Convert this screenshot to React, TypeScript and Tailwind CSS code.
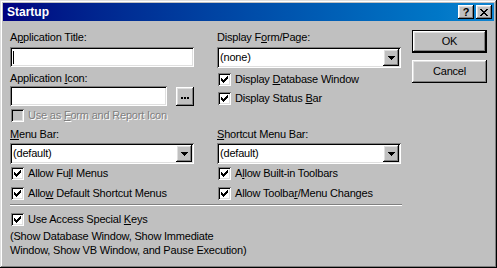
import React from "react";

const sunken =
  "shadow-[inset_1px_1px_#808080,inset_-1px_-1px_#ffffff,inset_2px_2px_#000000,inset_-2px_-2px_#dfdfdf]";
const raised =
  "shadow-[inset_-1px_-1px_#000000,inset_1px_1px_#ffffff,inset_-2px_-2px_#808080,inset_2px_2px_#dfdfdf]";

function Pixels({ rows, color = "#000" }: { rows: string[]; color?: string }) {
  const w = rows[0].length;
  const h = rows.length;
  return (
    <svg width={w} height={h} viewBox={`0 0 ${w} ${h}`} shapeRendering="crispEdges">
      {rows.flatMap((r, y) =>
        r.split("").map((c, x) =>
          c === "x" ? <rect key={`${x}-${y}`} x={x} y={y} width="1" height="1" fill={color} /> : null
        )
      )}
    </svg>
  );
}

const checkRows = ["......x", ".....xx", "x...xxx", "xx.xxx.", "xxxxx..", ".xxx...", "..x...."];
const closeRows = ["xx....xx", ".xx..xx.", "..xxxx..", "...xx...", "..xxxx..", ".xx..xx.", "xx....xx"];
const arrowRows = ["xxxxxxx", ".xxxxx.", "..xxx..", "...x..."];

function Check({
  children,
  disabled = false,
  checked = true,
}: {
  children: React.ReactNode;
  disabled?: boolean;
  checked?: boolean;
}) {
  return (
    <div className="flex items-center h-[13px] ml-[1px]">
      <span
        className={`flex items-center justify-center w-[13px] h-[13px] shrink-0 ${
          disabled ? "bg-[#c0c0c0]" : "bg-white"
        } ${sunken}`}
      >
        {checked && <Pixels rows={checkRows} />}
      </span>
      <span
        className={`ml-[4px] leading-[13px] whitespace-nowrap ${
          disabled ? "text-[#808080] [text-shadow:1px_1px_0_#ffffff]" : ""
        }`}
      >
        {children}
      </span>
    </div>
  );
}

function Combo({ value }: { value: string }) {
  return (
    <div className={`flex items-center h-[21px] w-full bg-white p-[2px] ${sunken}`}>
      <span className="flex-1 pl-[1px] leading-[13px]">{value}</span>
      <span className={`flex items-center justify-center w-[16px] h-[17px] bg-[#c0c0c0] ${raised}`}>
        <Pixels rows={arrowRows} />
      </span>
    </div>
  );
}

function Label({ children, className = "" }: { children: React.ReactNode; className?: string }) {
  return <div className={`h-[13px] leading-[13px] whitespace-nowrap ${className}`}>{children}</div>;
}

export default function App() {
  return (
    <div
      className={`flex flex-col w-[497px] h-[268px] p-[3px] bg-[#c0c0c0] text-[11px] tracking-[-0.2px] text-black font-['Liberation_Sans',Arial,sans-serif] shadow-[inset_-1px_-1px_#000000,inset_1px_1px_#dfdfdf,inset_-2px_-2px_#808080,inset_2px_2px_#ffffff]`}
    >
      {/* Title bar */}
      <div className="flex items-center h-[18px] pl-[4px] pr-[2px] bg-gradient-to-r from-[#000080] to-[#1084d0]">
        <span className="flex-1 text-white font-bold text-[12px] tracking-normal leading-[13px]">Startup</span>
        <div className="flex gap-[2px]">
          <span
            className={`flex items-center justify-center w-[16px] h-[14px] bg-[#c0c0c0] font-bold text-[11px] leading-[11px] ${raised}`}
          >
            ?
          </span>
          <span className={`flex items-center justify-center w-[16px] h-[14px] bg-[#c0c0c0] ${raised}`}>
            <Pixels rows={closeRows} />
          </span>
        </div>
      </div>

      {/* Body */}
      <div className="flex pl-[7px] pt-[9px]">
        <div className="flex flex-col w-[392px]">
          <div className="grid grid-cols-[184px_184px] gap-x-[23px] gap-y-[6px] mt-[1px]">
            {/* left top */}
            <div className="flex flex-col">
              <Label>
                A<u>p</u>plication Title:
              </Label>
              <div className={`flex items-center h-[20px] mt-[3px] pl-[3px] bg-white ${sunken}`}>
                <span className="w-px h-[13px] bg-black" />
              </div>
              <Label className="mt-[5px]">
                Application <u>I</u>con:
              </Label>
              <div className="flex mt-[1px]">
                <div className={`w-[157px] h-[20px] bg-white ${sunken}`} />
                <div
                  className={`flex items-end justify-center gap-[1px] w-[18px] h-[19px] mt-[1px] ml-[9px] pb-[7px] bg-[#c0c0c0] ${raised}`}
                >
                  <span className="w-[2px] h-[2px] bg-black" />
                  <span className="w-[2px] h-[2px] bg-black" />
                  <span className="w-[2px] h-[2px] bg-black" />
                </div>
              </div>
              <div className="mt-[3px]">
                <Check disabled checked={false}>
                  Use as <u>F</u>orm and Report Icon
                </Check>
              </div>
            </div>

            {/* middle top */}
            <div className="flex flex-col">
              <Label>
                Display F<u>o</u>rm/Page:
              </Label>
              <div className="mt-[3px]">
                <Combo value="(none)" />
              </div>
              <div className="mt-[5px]">
                <Check>
                  Display <u>D</u>atabase Window
                </Check>
              </div>
              <div className="mt-[6px]">
                <Check>
                  Display Status <u>B</u>ar
                </Check>
              </div>
            </div>

            {/* left bottom */}
            <div className="flex flex-col">
              <Label>
                <u>M</u>enu Bar:
              </Label>
              <div className="mt-[2px]">
                <Combo value="(default)" />
              </div>
              <div className="mt-[3px]">
                <Check>
                  Allow Fu<u>l</u>l Menus
                </Check>
              </div>
              <div className="mt-[7px]">
                <Check>
                  Allo<u>w</u> Default Shortcut Menus
                </Check>
              </div>
            </div>

            {/* middle bottom */}
            <div className="flex flex-col">
              <Label>
                <u>S</u>hortcut Menu Bar:
              </Label>
              <div className="mt-[2px]">
                <Combo value="(default)" />
              </div>
              <div className="mt-[3px]">
                <Check>
                  A<u>l</u>low Built-in Toolbars
                </Check>
              </div>
              <div className="mt-[7px]">
                <Check>
                  Allow Toolba<u>r</u>/Menu Changes
                </Check>
              </div>
            </div>
          </div>

          <div className="mt-[4px] h-[2px] border-t border-t-[#808080] border-b border-b-white" />

          <div className="mt-[7px]">
            <Check>
              Use Access Special <u>K</u>eys
            </Check>
          </div>
          <p className="mt-[3px] leading-[14px]">
            (Show Database Window, Show Immediate
            <br />
            Window, Show VB Window, and Pause Execution)
          </p>
        </div>

        {/* Buttons */}
        <div className="flex flex-col gap-[7px] ml-[10px]">
          <div className="w-[75px] h-[23px] border border-black">
            <div className={`flex items-center justify-center w-full h-full bg-[#c0c0c0] ${raised}`}>OK</div>
          </div>
          <div className={`flex items-center justify-center w-[75px] h-[23px] bg-[#c0c0c0] ${raised}`}>Cancel</div>
        </div>
      </div>
    </div>
  );
}
